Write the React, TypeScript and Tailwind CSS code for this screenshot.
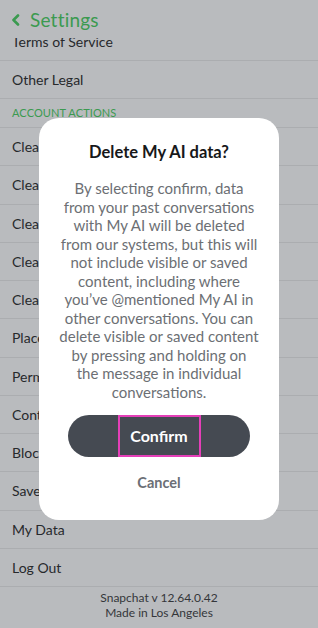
import React from 'react';

const rows = [
  'Clear Conversations',
  'Clear Search History',
  'Clear Top Locations',
  'Clear Lens Data',
  'Clear Cache',
  'Places Data',
  'Permissions',
  'Contact Syncing',
  'Blocked',
  'Saved Data',
  'My Data',
  'Log Out',
];

const bodyLines = [
  'By selecting confirm, data',
  'from your past conversations',
  'with My AI will be deleted',
  'from our systems, but this will',
  'not include visible or saved',
  'content, including where',
  'you’ve @mentioned My AI in',
  'other conversations. You can',
  'delete visible or saved content',
  'by pressing and holding on',
  'the message in individual',
  'conversations.',
];

export default function App() {
  return (
    <div
      className="relative w-[318px] h-[628px] overflow-hidden bg-[#b9bbbe] text-[#27292c]"
      style={{ fontFamily: 'Lato, "Open Sans", sans-serif' }}
    >
      {/* Header */}
      <div className="relative z-10 h-[38px] bg-[#b9bbbe] flex items-center pl-[11px] gap-[10px]">
        <svg width="9" height="12" viewBox="0 0 9 12" className="mt-[1px]">
          <polyline points="7,1.5 2.5,6 7,10.5" fill="none" stroke="#3b9a50" strokeWidth="2.6" strokeLinecap="round" strokeLinejoin="round" />
        </svg>
        <span className="text-[19px] leading-none text-[#3b9a50] tracking-[0.2px]">Settings</span>
      </div>

      {/* List */}
      <div className="-mt-[15px]">
        <div className="h-[38px] flex items-center px-3 text-[14px] border-b border-[#abadb0]">Terms of Service</div>
        <div className="h-[38px] flex items-center px-3 text-[14px] border-b border-[#abadb0]">Other Legal</div>
        <div className="h-[29px] flex items-center px-3 text-[11px] text-[#3b9a50] tracking-[0.1px] border-b border-[#abadb0]">ACCOUNT ACTIONS</div>
        {rows.map((r) => (
          <div key={r} className="h-[38.25px] flex items-center px-3 text-[14px] border-b border-[#abadb0]">
            {r}
          </div>
        ))}
        <div className="pt-[3px] flex flex-col items-center text-[12px] leading-[15px] text-[#34363a]">
          <span>Snapchat v 12.64.0.42</span>
          <span>Made in Los Angeles</span>
        </div>
      </div>

      {/* Modal */}
      <div className="absolute left-[39px] top-[118px] w-[240px] h-[402px] rounded-[20px] bg-white flex flex-col items-center pt-[23px]">
        <h2 className="text-[16.5px] leading-[22px] font-bold text-[#17181a]">Delete My AI data?</h2>
        <div className="mt-[16px] flex flex-col items-center text-[15px] leading-[18.5px] text-[#6c6f74] whitespace-nowrap">
          {bodyLines.map((l, i) => (
            <span key={i} className="block h-[18.5px]">{l}</span>
          ))}
        </div>
        <button className="mt-[14px] w-[182px] h-[42px] rounded-full bg-[#454a52] flex items-center justify-center">
          <span className="w-[83px] h-[42px] border-2 border-[#e43fb8] flex items-center justify-center text-white text-[16px] font-bold">
            Confirm
          </span>
        </button>
        <button className="mt-[16px] text-[14.5px] leading-[20px] font-bold text-[#6b6f76]">Cancel</button>
      </div>
    </div>
  );
}
